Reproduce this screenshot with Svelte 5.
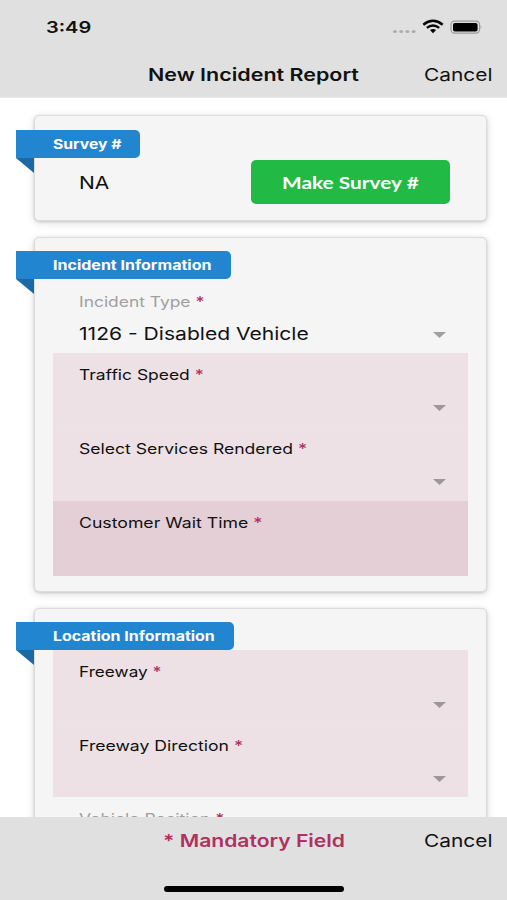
<script>
	const sections = [
		{
			title: "Incident Information",
			titleWidth: 159,
			ribbonWidth: 215,
			fields: [
				{ label: "Incident Type", width: 126, value: "1126 - Disabled Vehicle", valueWidth: 230, state: "filled", select: true },
				{ label: "Traffic Speed", width: 125, state: "missing", select: true },
				{ label: "Select Services Rendered", width: 228, state: "missing", select: true },
				{ label: "Customer Wait Time", width: 184, state: "missing focused", select: false }
			]
		},
		{
			title: "Location Information",
			titleWidth: 162,
			ribbonWidth: 218,
			fields: [
				{ label: "Freeway", width: 83, state: "missing", select: true },
				{ label: "Freeway Direction", width: 164, state: "missing", select: true },
				{ label: "Vehicle Position", width: 145, state: "filled", select: true }
			]
		}
	];

	// Stretches a text horizontally so it fills the given width
	const fit = (node, width) => {
		node.style.transform = `scaleX(${width / node.offsetWidth})`;
	};
</script>

<main>
	<header>
		<div class="status">
			<span class="time text" use:fit={45}>3:49</span>
			<svg width="92" height="18" viewBox="0 0 92 18">
				<g fill="#adadad">
					<ellipse cx="5" cy="13.5" rx="2" ry="1.6" />
					<ellipse cx="11.2" cy="13.5" rx="2" ry="1.6" />
					<ellipse cx="17.4" cy="13.5" rx="2" ry="1.6" />
					<ellipse cx="23.6" cy="13.5" rx="2" ry="1.6" />
				</g>
				<g fill="none" stroke="#050505" stroke-width="2.4">
					<path d="M33.3 6.7 Q43 -1 52.7 6.7" />
					<path d="M36.8 9.9 Q43 5 49.2 9.9" />
				</g>
				<path d="M39.9 12.1 Q43 9.9 46.1 12.1 L43 15.2 Z" fill="#050505" />
				<rect x="61" y="3.1" width="28.6" height="12" rx="3.6" fill="none" stroke="#9a9a9a" stroke-width="1.1" />
				<rect x="63" y="4.9" width="24.6" height="8.5" rx="2" fill="#000" />
				<path d="M90.6 7.3 q1.6 1.8 0 3.6z" fill="#999" />
			</svg>
		</div>
		<div class="bar">
			<span class="title text" use:fit={211}>New Incident Report</span>
			<span class="cancel text" use:fit={68}>Cancel</span>
		</div>
	</header>

	<div class="content">
		<section class="survey">
			<div class="ribbon" style="width:124px"><span class="text" use:fit={69}>Survey #</span></div>
			<div class="number">
				<span class="value text" use:fit={30}>NA</span>
				<button><span class="text" use:fit={137}>Make Survey #</span></button>
			</div>
		</section>

		{#each sections as section}
			<section>
				<div class="ribbon" style="width:{section.ribbonWidth}px">
					<span class="text" use:fit={section.titleWidth}>{section.title}</span>
				</div>
				<div class="fields">
					{#each section.fields as field}
						<div class="field {field.state}">
							<div class="label"><span class="text" use:fit={field.width}>{field.label} <b>*</b></span></div>
							<div class="input">
								{#if field.value}
									<span class="value text" use:fit={field.valueWidth}>{field.value}</span>
								{/if}
								{#if field.select}
									<svg class="arrow" width="13" height="6" viewBox="0 0 13 6"><path d="M0 0H13L6.5 6Z" /></svg>
								{/if}
							</div>
						</div>
					{/each}
				</div>
			</section>
		{/each}
	</div>

	<footer>
		<div class="bar">
			<span class="mandatory text" use:fit={182}>* Mandatory Field</span>
			<span class="cancel text" use:fit={68}>Cancel</span>
		</div>
		<div class="home"></div>
	</footer>
</main>

<style>
	:global(body) {
		margin: 0;
		background: #fff;
	}
	* {
		box-sizing: border-box;
	}

	main {
		display: flex;
		flex-direction: column;
		width: 507px;
		height: 900px;
		overflow: hidden;
		font-family: Inter, "Liberation Sans", sans-serif;
		color: #111;
	}
	.text {
		display: inline-block;
		white-space: nowrap;
		transform-origin: left center;
	}

	header, footer {
		flex: none;
		background: #e0e0e0;
		z-index: 1;
	}
	header {
		height: 98px;
		padding-top: 18px;
		border-bottom: 1px solid #e9e9e9;
	}
	.status {
		display: flex;
		justify-content: space-between;
		align-items: center;
		height: 18px;
		padding: 0 25px 0 46px;
	}
	.time {
		font-size: 16px;
		font-weight: 600;
	}
	.bar {
		display: grid;
		grid-template-columns: 276px 68px;
		justify-content: end;
		align-items: center;
		height: 24px;
		padding-right: 15px;
		line-height: 24px;
		font-size: 17.5px;
	}
	header .bar {
		margin-top: 27px;
	}
	.bar .text {
		justify-self: start;
	}
	.title {
		font-weight: 600;
	}

	.content {
		flex: 1;
		min-height: 0;
		overflow: hidden;
		padding: 17px 20px 0 34px;
	}
	section {
		height: 355px;
		padding: 13px 18px 0;
		margin-bottom: 15.5px;
		background: #f5f5f5;
		border: 1px solid #dcdcdc;
		border-radius: 5px;
		box-shadow: 0 1px 3px rgba(0, 0, 0, 0.16), 0 2px 10px rgba(0, 0, 0, 0.12);
	}
	.survey {
		height: 106px;
		padding-top: 14px;
		margin-bottom: 16px;
	}

	.ribbon {
		position: relative;
		height: 28px;
		margin-left: -37px;
		padding-left: 37px;
		line-height: 28px;
		font-size: 13px;
		font-weight: 700;
		color: #fff;
		background: #2185d0;
		border-radius: 0 5px 5px 0;
	}
	.ribbon::after {
		content: "";
		position: absolute;
		top: 100%;
		left: 0;
		border-style: solid;
		border-width: 0 18px 15px 0;
		border-color: transparent #1a69a4 transparent transparent;
	}

	.number {
		display: flex;
		justify-content: space-between;
		align-items: center;
		height: 44px;
		margin-top: 2px;
		padding: 0 18px 0 26px;
	}
	button {
		display: flex;
		align-items: center;
		width: 199px;
		height: 44px;
		padding: 0 0 0 31px;
		border: 0;
		border-radius: 5px;
		background: #21ba45;
		color: #fff;
		font-family: Lato, sans-serif;
		font-size: 17.5px;
		font-weight: 700;
	}

	.fields {
		padding-top: 0.5px;
	}
	.field {
		height: 73.7px;
		padding: 11px 22px 0 26px;
	}
	.missing {
		background: #ede1e5;
	}
	.missing + .missing {
		border-top: 1px solid #eee3e7;
		padding-top: 10px;
	}
	.missing.focused {
		height: 75px;
		background: #e5cfd7;
		border-top-color: #e5cfd7;
	}
	.label {
		height: 20px;
		line-height: 21px;
		font-size: 14.5px;
	}
	.filled .label {
		color: #a0a0a0;
	}
	b {
		color: #b03060;
		font-weight: 500;
	}
	.input {
		display: flex;
		align-items: center;
		height: 24px;
		margin-top: 12px;
	}
	.value {
		font-size: 17.5px;
	}
	.input .value {
		line-height: 20px;
		padding-bottom: 1px;
	}
	.arrow {
		margin-left: auto;
		fill: #a0a0a0;
	}
	.missing .arrow {
		fill: #9e969a;
	}

	footer {
		height: 83px;
		padding-top: 12px;
	}
	footer .bar {
		grid-template-columns: 261px 68px;
	}
	.mandatory {
		color: #b03060;
		font-weight: 600;
	}
	.home {
		width: 180px;
		height: 6px;
		margin: 33px auto 0;
		border-radius: 3px;
		background: #000;
	}
</style>
